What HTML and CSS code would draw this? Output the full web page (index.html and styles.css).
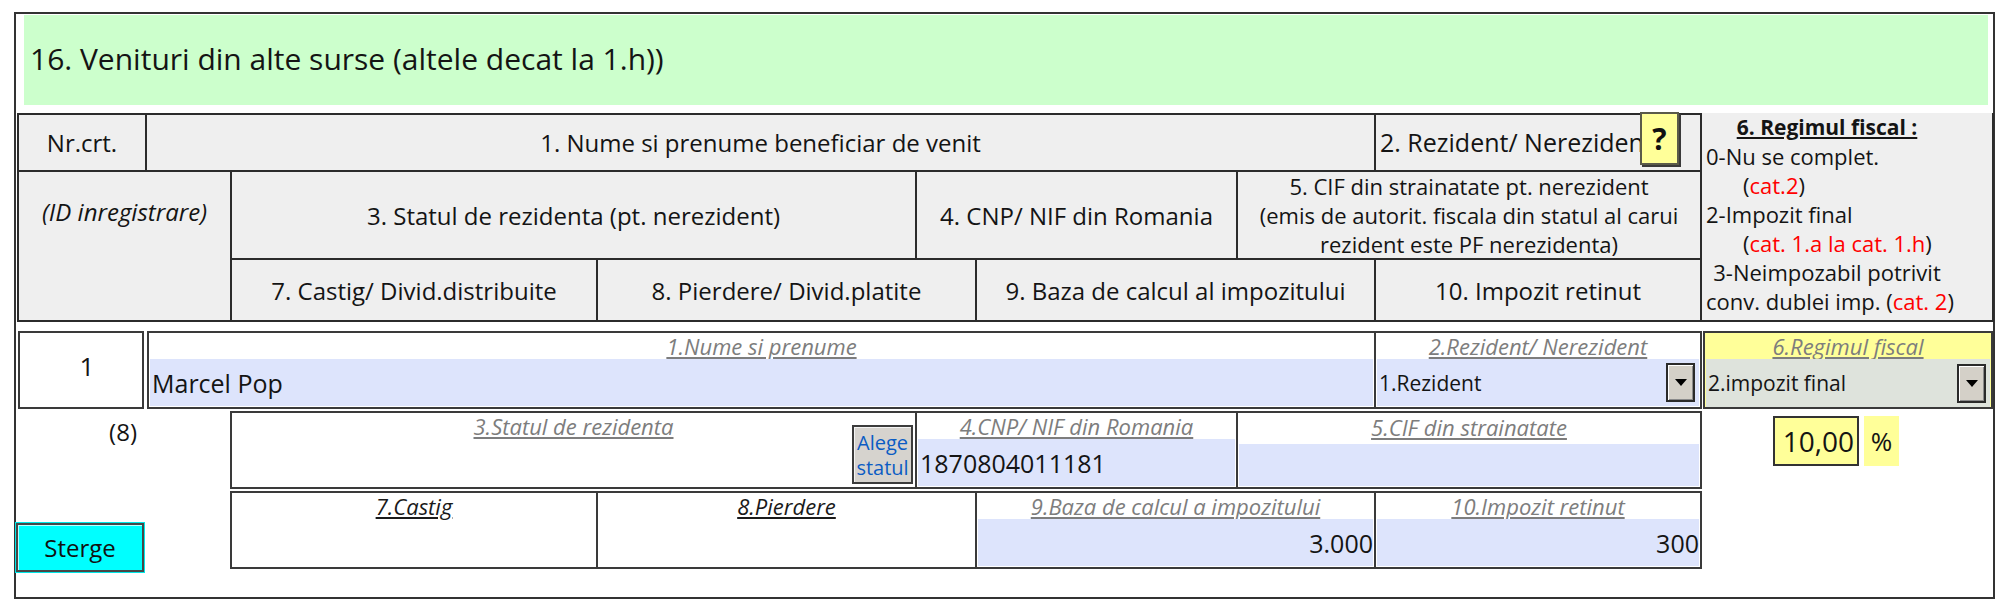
FILE: index.html
```html
<!DOCTYPE html>
<html lang="ro">
<head>
<meta charset="utf-8">
<title>Venituri din alte surse</title>
<link rel="stylesheet" href="styles.css">
</head>
<body>
<section class="frame">
  <h2 class="banner">16. Venituri din alte surse (altele decat la 1.h))</h2>

  <div class="head">
    <div class="hc h-nr">Nr.crt.</div>
    <div class="hc h-name">1. Nume si prenume beneficiar de venit</div>
    <div class="hc h-rez">
      <span class="rez-text">2. Rezident/ Nerezident</span>
      <button class="help" type="button">?</button>
    </div>
    <div class="hc h-regim">
      <div class="regim-title">6. Regimul fiscal :</div>
      <div class="regim-line">0-Nu se complet.</div>
      <div class="regim-line sub">(<span class="red">cat.2</span>)</div>
      <div class="regim-line">2-Impozit final</div>
      <div class="regim-line sub">(<span class="red">cat. 1.a la cat. 1.h</span>)</div>
      <div class="regim-line mid">3-Neimpozabil potrivit</div>
      <div class="regim-line mid">conv. dublei imp. (<span class="red">cat. 2</span>)</div>
    </div>
    <div class="hc h-id">(ID inregistrare)</div>
    <div class="hc h-stat">3. Statul de rezidenta (pt. nerezident)</div>
    <div class="hc h-cnp">4. CNP/ NIF din Romania</div>
    <div class="hc h-cif">5. CIF din strainatate pt. nerezident<br>(emis de autorit. fiscala din statul al carui<br>rezident este PF nerezidenta)</div>
    <div class="hc h-7">7. Castig/ Divid.distribuite</div>
    <div class="hc h-8">8. Pierdere/ Divid.platite</div>
    <div class="hc h-9">9. Baza de calcul al impozitului</div>
    <div class="hc h-10">10. Impozit retinut</div>
  </div>

  <div class="entry">
    <div class="num">1</div>

    <div class="field f-name">
      <span class="lbl">1.Nume si prenume</span>
      <div class="val name-val">Marcel Pop</div>
    </div>

    <div class="field f-rez">
      <span class="lbl">2.Rezident/ Nerezident</span>
      <div class="val pick">
        <span class="pick-text">1.Rezident</span>
        <span class="drop"><span class="tri"></span></span>
      </div>
    </div>

    <div class="field f-regim">
      <span class="lbl">6.Regimul fiscal</span>
      <div class="val pick sel">
        <span class="pick-text">2.impozit final</span>
        <span class="drop"><span class="tri"></span></span>
      </div>
    </div>

    <div class="tag">(8)</div>

    <div class="field f-stat">
      <span class="lbl">3.Statul de rezidenta</span>
      <div class="stat-body">
        <button class="choose" type="button">Alege<br>statul</button>
      </div>
    </div>

    <div class="field f-cnp">
      <span class="lbl">4.CNP/ NIF din Romania</span>
      <div class="val">1870804011181</div>
    </div>

    <div class="field f-cif">
      <span class="lbl lbl-tall">5.CIF din strainatate</span>
      <div class="val"></div>
    </div>

    <div class="pct">
      <span class="rate">10,00</span>
      <span class="pct-sign">%</span>
    </div>

    <button class="sterge" type="button">Sterge</button>

    <div class="field f-7">
      <span class="lbl dark">7.Castig</span>
    </div>

    <div class="field f-8">
      <span class="lbl dark">8.Pierdere</span>
    </div>

    <div class="field f-9">
      <span class="lbl">9.Baza de calcul a impozitului</span>
      <div class="val num-val">3.000</div>
    </div>

    <div class="field f-10">
      <span class="lbl">10.Impozit retinut</span>
      <div class="val num-val">300</div>
    </div>
  </div>
</section>
</body>
</html>
```

FILE: styles.css
```css
* { box-sizing: border-box; }

html, body {
  margin: 0;
  background: #ffffff;
}

body {
  font-family: "Open Sans", "Noto Sans", sans-serif;
  color: #141414;
}

/* outer frame of the section */
.frame {
  margin: 12px 0 0 14px;
  width: 1981px;
  height: 587px;
  border: 2px solid #333333;
}

.banner {
  margin: 1px 0 0 8px;
  width: 1964px;
  height: 90px;
  padding: 0 0 3px 6px;
  display: flex;
  align-items: center;
  background: #ccffcc;
  font-size: 30px;
  font-weight: 400;
}

/* column header grid */
.head {
  margin: 8px 0 0 1px;
  width: 1977px;
  display: grid;
  grid-template-columns: 128px 85px 366px 319px 60px 261px 138px 326px 292px;
  grid-template-rows: 57px 88px 62px;
  border-top: 2px solid #2b2b2b;
  border-left: 2px solid #2b2b2b;
}

.hc {
  background: #efefef;
  border-right: 2px solid #2b2b2b;
  border-bottom: 2px solid #2b2b2b;
  display: flex;
  align-items: center;
  justify-content: center;
  text-align: center;
  font-size: 24px;
  line-height: 29px;
}

.h-nr { grid-column: 1; grid-row: 1; }
.h-name { grid-column: 2 / 8; grid-row: 1; }
.h-rez {
  grid-column: 8; grid-row: 1;
  justify-content: flex-start;
  padding-left: 4px;
  position: relative;
  white-space: nowrap;
  font-size: 25px;
}
.h-regim {
  grid-column: 9; grid-row: 1 / 4;
  flex-direction: column;
  align-items: stretch;
  justify-content: flex-start;
  padding: 0 44px 0 4px;
  margin-top: -2px;
  font-size: 22px;
}
.h-id { grid-column: 1 / 3; grid-row: 2 / 4; align-items: flex-start; padding-top: 25px; font-style: italic; }
.h-stat { grid-column: 3 / 5; grid-row: 2; }
.h-cnp { grid-column: 5 / 7; grid-row: 2; }
.h-cif { grid-column: 7 / 9; grid-row: 2; font-size: 22px; }
.h-7 { grid-column: 3; grid-row: 3; }
.h-8 { grid-column: 4 / 6; grid-row: 3; }
.h-9 { grid-column: 6 / 8; grid-row: 3; }
.h-10 { grid-column: 8; grid-row: 3; }

/* yellow "?" help button floating over the header text */
.help {
  position: absolute;
  top: -3px;
  left: 264px;
  width: 39px;
  height: 53px;
  padding: 0;
  background: #ffff99;
  border: 2px solid #5a5a4a;
  box-shadow: 2px 2px 0 #3a3a3a;
  font-family: "Open Sans", sans-serif;
  font-size: 30px;
  font-weight: 700;
  color: #111;
  line-height: 1;
}

.regim-title {
  text-align: center;
  font-weight: 700;
  font-size: 21px;
  text-decoration: underline;
}
.regim-line { text-align: left; white-space: nowrap; }
.regim-line.sub { padding-left: 37px; }
.regim-line.mid { text-align: center; }
.red { color: #ff0000; }

/* data entry grid */
.entry {
  margin: 9px 0 0 1px;
  width: 1977px;
  display: grid;
  grid-template-columns: 130px 85px 366px 319px 60px 261px 138px 326px 292px;
  grid-template-rows: 78px 78px 78px;
  row-gap: 2px;
}

.num {
  grid-column: 1; grid-row: 1;
  margin: 0 3px 0 1px;
  padding: 0 0 8px 12px;
  border: 2px solid #3a3a3a;
  display: flex;
  align-items: center;
  justify-content: center;
  font-size: 26px;
}

.field {
  display: flex;
  flex-direction: column;
  border: 2px solid #3a3a3a;
  background: #ffffff;
  min-width: 0;
}

.lbl {
  display: block;
  height: 26px;
  line-height: 26px;
  text-align: center;
  font-size: 22px;
  font-style: italic;
  color: #7d7d7d;
  text-decoration: underline;
  white-space: nowrap;
}
.lbl.dark { color: #1a1a1a; }
.lbl-tall { height: 31px; line-height: 28px; }

.val {
  flex: 1;
  margin: 0 1px 1px;
  padding: 0 2px;
  background: #dde4fc;
  display: flex;
  align-items: center;
  font-size: 25px;
  white-space: nowrap;
}
.name-val { font-size: 25px; }
.num-val { justify-content: flex-end; padding-right: 0; }

.pick { font-size: 21px; justify-content: space-between; padding-right: 4px; }
.pick.sel { background: #dee3dc; margin: 0 1px 0; }

/* combo box arrow button */
.drop {
  width: 29px;
  height: 39px;
  background: #d4d0c8;
  border: 2px solid #2a2a2a;
  box-shadow: inset 1px 1px 0 #ffffff, inset -1px -1px 0 #8a8a8a;
  display: flex;
  align-items: center;
  justify-content: center;
}
.tri {
  width: 0;
  height: 0;
  border-left: 6px solid transparent;
  border-right: 6px solid transparent;
  border-top: 7px solid #000000;
}

.f-name { grid-column: 2 / 8; grid-row: 1; }
.f-rez { grid-column: 8; grid-row: 1; margin-left: -2px; }
.f-regim { grid-column: 9; grid-row: 1; margin: 0 1px 0 1px; background: #ffff99; }

.tag {
  grid-column: 1; grid-row: 2;
  text-align: right;
  padding: 4px 10px 0 0;
  font-size: 24px;
}

.f-stat { grid-column: 3 / 5; grid-row: 2; margin-left: -2px; }
.f-cnp { grid-column: 5 / 7; grid-row: 2; margin-left: -2px; }
.f-cif { grid-column: 7 / 9; grid-row: 2; margin-left: -2px; }

.stat-body {
  flex: 1;
  display: flex;
  justify-content: flex-end;
  align-items: flex-end;
  padding: 0 2px 3px 0;
}

.choose {
  margin-top: -15px;
  width: 61px;
  height: 59px;
  padding: 0;
  background: #d6d3ce;
  border: 2px solid #3c3c3c;
  box-shadow: inset 1px 1px 0 #f4f4f4;
  font-family: "Open Sans", sans-serif;
  font-size: 20px;
  line-height: 25px;
  color: #0b5cc4;
}

.pct {
  grid-column: 9; grid-row: 2;
  display: flex;
  justify-content: center;
  align-items: flex-start;
  gap: 5px;
  padding: 5px 24px 0 0;
}
.rate {
  width: 86px;
  height: 50px;
  background: #ffff99;
  border: 2px solid #333333;
  display: flex;
  align-items: center;
  justify-content: flex-end;
  padding-right: 3px;
  font-size: 28px;
}
.pct-sign {
  width: 35px;
  height: 50px;
  background: #ffff99;
  display: flex;
  align-items: center;
  justify-content: center;
  font-size: 26px;
}

.sterge {
  grid-column: 1; grid-row: 3;
  align-self: end;
  margin: 0 3px -3px -1px;
  height: 49px;
  padding: 0;
  background: #00ffff;
  border: 2px solid #474747;
  box-shadow: 0 0 0 1px #00e8e8, inset 1px 1px 0 #b8ffff;
  font-family: "Open Sans", sans-serif;
  font-size: 24px;
  color: #111;
}

.f-7 { grid-column: 3; grid-row: 3; margin-left: -2px; }
.f-8 { grid-column: 4 / 6; grid-row: 3; margin-left: -2px; }
.f-9 { grid-column: 6 / 8; grid-row: 3; margin-left: -2px; }
.f-10 { grid-column: 8; grid-row: 3; margin-left: -2px; }
```
